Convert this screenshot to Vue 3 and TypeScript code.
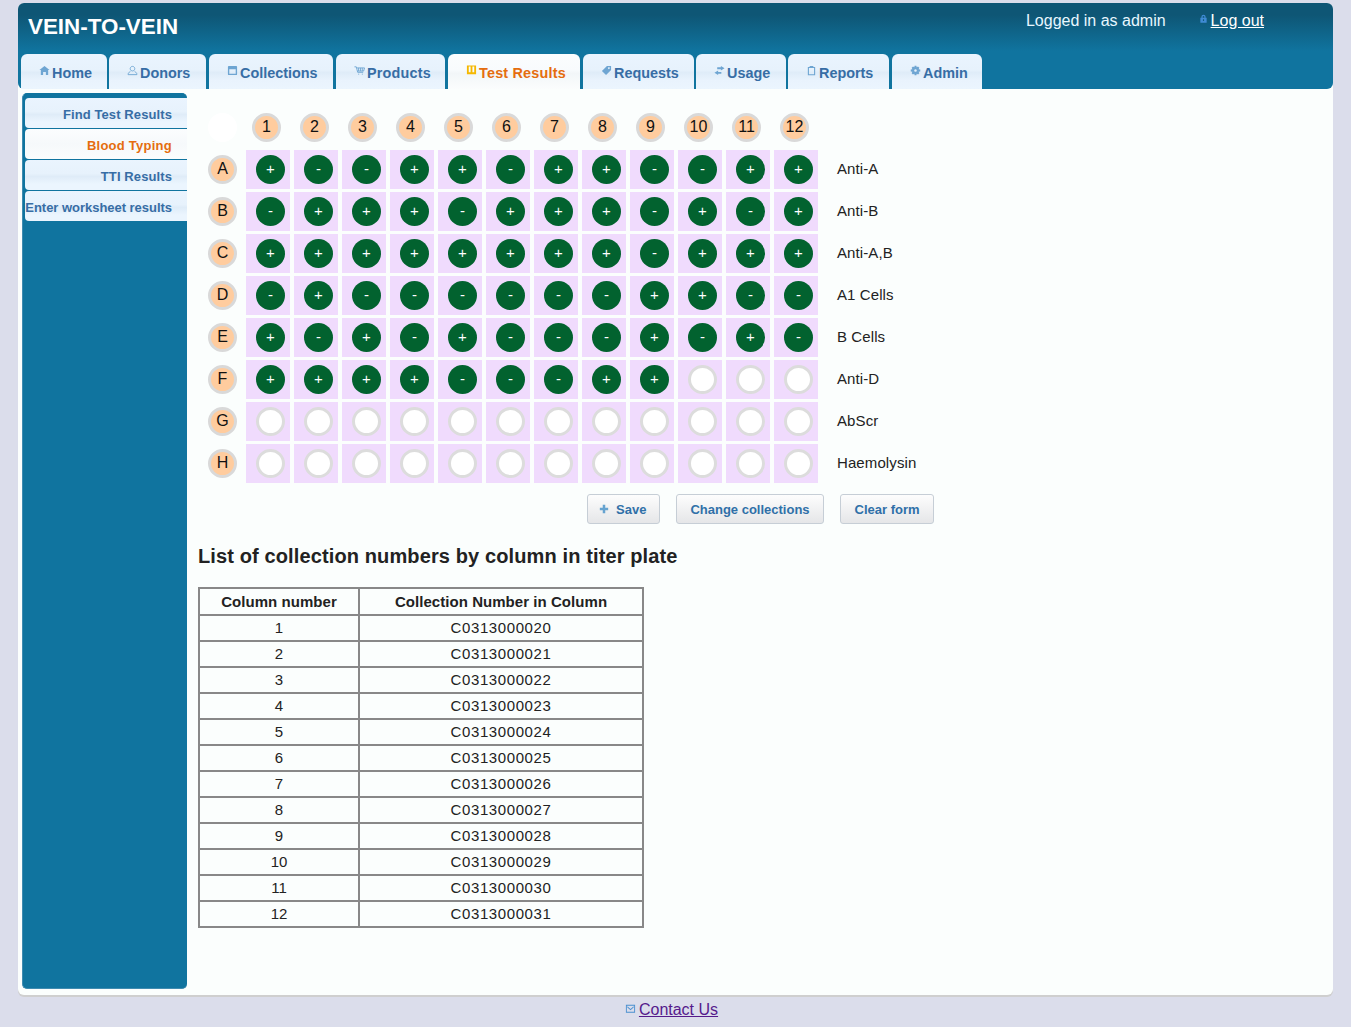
<script setup lang="ts">
interface Tab { label: string; icon: string; active?: boolean; w: number; mr: number; wide?: boolean }

const icons: Record<string, string> = {
  home: 'M6 1 L11.5 5.5 L10 5.5 L10 11 L7.5 11 L7.5 7.5 L4.5 7.5 L4.5 11 L2 11 L2 5.5 L0.5 5.5 Z',
  donor: 'M6 1.5 a2.5 2.5 0 1 1 -0.01 0 Z M3.8 6.8 L1.2 9.2 L1.2 10.5 L10.8 10.5 L10.8 9.2 L8.2 6.8',
  collection: 'M2 1 H10 A1 1 0 0 1 11 2 V10 A1 1 0 0 1 10 11 H2 A1 1 0 0 1 1 10 V2 A1 1 0 0 1 2 1 Z M2.5 4.5 V9.5 H9.5 V4.5 Z',
  cart: 'M0.5 2 H2.5 L4 8 H10 M3 3.2 H11.5 L10.5 6.6 H3.8 M5 3.2 V6.6 M7 3.2 V6.6 M9 3.2 V6.6 M4.6 10 h1 M8.6 10 h1',
  book: 'M1 0.5 H11 V10 H1 Z M3 1.5 V8 H5 V1.5 Z M7 1.5 V8 H9 V1.5 Z',
  tag: 'M6.5 1 H11 V5.5 L5.5 11 L1 6.5 Z M8.6 2.4 a1 1 0 1 0 0.01 0 Z',
  swap: 'M7.5 1 L11.5 3.5 L7.5 6 V4.5 H3.5 V2.5 H7.5 Z M4.5 6 V7.5 H8 V9.5 H4.5 V11 L0.5 8.5 Z',
  clip: 'M4 1 H8 V2.2 H10 V11.2 H2 V2.2 H4 Z M3.2 3.4 V10 H8.8 V3.4 Z',
  gear: 'M5 0.8 H7 L7.3 2.4 L8.7 1.6 L10.2 3 L9.4 4.5 L11.2 5 V7 L9.4 7.4 L10.2 9 L8.8 10.4 L7.3 9.6 L7 11.2 H5 L4.7 9.6 L3.2 10.4 L1.8 9 L2.6 7.4 L0.8 7 V5 L2.6 4.5 L1.8 3 L3.3 1.6 L4.7 2.4 Z M6 4.6 a1.4 1.4 0 1 0 0.01 0 Z',
  lock: 'M3 5 V3.6 A3 3 0 0 1 9 3.6 V5 H10.5 V12 H1.5 V5 Z M4.8 5 H7.2 V3.6 A1.2 1.2 0 0 0 4.8 3.6 Z M5.2 7.2 H6.8 V9.5 H5.2 Z',
  mail: 'M1 2 H11 V10.5 H1 Z M2 3 V9.5 H10 V3 Z M2.6 3.6 L6 6.6 L9.4 3.6 L9.4 4.8 L6 7.8 L2.6 4.8 Z',
  plus: 'M4.5 1 H7.5 V4.5 H11 V7.5 H7.5 V11 H4.5 V7.5 H1 V4.5 H4.5 Z'
}

const tabs: Tab[] = [
  { label: 'Home', icon: 'home', w: 86, mr: 2 },
  { label: 'Donors', icon: 'donor', w: 97, mr: 3 },
  { label: 'Collections', icon: 'collection', w: 124, mr: 3 },
  { label: 'Products', icon: 'cart', w: 109, mr: 3, wide: true },
  { label: 'Test Results', icon: 'book', active: true, w: 132, mr: 3, wide: true },
  { label: 'Requests', icon: 'tag', w: 111, mr: 2 },
  { label: 'Usage', icon: 'swap', w: 90, mr: 2 },
  { label: 'Reports', icon: 'clip', w: 101, mr: 3 },
  { label: 'Admin', icon: 'gear', w: 90, mr: 0 }
]

const side = [
  { label: 'Find Test Results' },
  { label: 'Blood Typing', active: true },
  { label: 'TTI Results' },
  { label: 'Enter worksheet results', tight: true }
]

const cols = Array.from({ length: 12 }, (_, i) => i + 1)
const rows = [
  { key: 'A', name: 'Anti-A', wells: '+--++-++--++' },
  { key: 'B', name: 'Anti-B', wells: '-+++-+++-+-+' },
  { key: 'C', name: 'Anti-A,B', wells: '++++++++-+++' },
  { key: 'D', name: 'A1 Cells', wells: '-+------++--' },
  { key: 'E', name: 'B Cells', wells: '+-+-+---+-+-' },
  { key: 'F', name: 'Anti-D', wells: '++++---++   ' },
  { key: 'G', name: 'AbScr', wells: '            ' },
  { key: 'H', name: 'Haemolysin', wells: '            ' }
]

const numbers = cols.map((n) => ({
  col: n,
  id: 'C03130000' + String(19 + n)
}))
</script>

<template>
  <div class="page">
    <div class="shell">
      <header class="top">
        <div class="top-row">
          <h1 class="brand">VEIN-TO-VEIN</h1>
          <div class="user">
            <span class="who">Logged in as admin</span>
            <svg class="lock" viewBox="1 0 10 12"><path :d="icons.lock" fill-rule="evenodd" /></svg>
            <a class="logout" href="#">Log out</a>
          </div>
        </div>
        <nav class="tabs">
          <a
            v-for="t in tabs"
            :key="t.label"
            class="tab"
            :class="{ on: t.active, wide: t.wide }"
            :style="{ width: t.w + 'px', marginRight: t.mr + 'px' }"
            href="#"
          >
            <svg class="ico" viewBox="0 0 12 12">
              <path :d="icons[t.icon]" fill-rule="evenodd" :class="{ line: t.icon === 'donor' || t.icon === 'cart' }" />
            </svg>
            <span>{{ t.label }}</span>
          </a>
        </nav>
      </header>

      <div class="body">
        <aside class="side">
          <a
            v-for="s in side"
            :key="s.label"
            class="side-item"
            :class="{ on: s.active, tight: s.tight }"
            href="#"
          >{{ s.label }}</a>
        </aside>

        <main class="main">
          <div class="plate">
            <div class="head-blank"><span class="blank"></span></div>
            <div v-for="c in cols" :key="c" class="head-cell"><span class="pill">{{ c }}</span></div>
            <div class="tail"></div>
            <template v-for="r in rows" :key="r.key">
              <div class="row-key"><span class="pill">{{ r.key }}</span></div>
              <div v-for="(w, i) in r.wells.split('')" :key="i" class="well">
                <span class="dot" :class="{ empty: w === ' ' }">{{ w === ' ' ? '' : w }}</span>
              </div>
              <div class="row-name">{{ r.name }}</div>
            </template>
          </div>

          <div class="actions">
            <button class="btn save" type="button">
              <svg class="plus" viewBox="0 0 12 12"><path :d="icons.plus" /></svg>Save
            </button>
            <button class="btn change" type="button">Change collections</button>
            <button class="btn clear" type="button">Clear form</button>
          </div>

          <h2 class="title">List of collection numbers by column in titer plate</h2>

          <table class="list">
            <thead>
              <tr><th class="c1">Column number</th><th class="c2">Collection Number in Column</th></tr>
            </thead>
            <tbody>
              <tr v-for="n in numbers" :key="n.col"><td>{{ n.col }}</td><td class="code">{{ n.id }}</td></tr>
            </tbody>
          </table>
        </main>
      </div>
    </div>
    <footer class="foot">
      <svg class="mail" viewBox="0 0 12 12"><path :d="icons.mail" fill-rule="evenodd" /></svg>
      <a class="contact" href="#">Contact Us</a>
    </footer>
  </div>
</template>

<style>
html, body { margin: 0; padding: 0; background: #dbddeb; }
</style>

<style scoped>
.page {
  width: 1351px;
  height: 1027px;
  padding-top: 3px;
  box-sizing: border-box;
  overflow: hidden;
  font-family: "Liberation Sans", Arial, sans-serif;
  color: #222;
}
.shell {
  margin-left: 18px;
  width: 1315px;
  height: 992px;
  background: #fbfefd;
  border-radius: 6px;
  box-shadow: 0 2px 0 #cfcfcf;
  display: flex;
  flex-direction: column;
}
.top {
  height: 86px;
  border-radius: 6px;
  background: linear-gradient(#0e5675 0, #0e5675 12px, #10749f 48px, #10749f 100%);
  display: flex;
  flex-direction: column;
  justify-content: space-between;
}
.top-row { display: flex; justify-content: space-between; }
.brand {
  margin: 10px 0 0 10px;
  font-size: 22.4px;
  line-height: 28px;
  font-weight: bold;
  color: #fff;
}
.user {
  display: flex;
  align-items: flex-start;
  margin: 8px 69px 0 0;
  font-size: 16px;
  line-height: 19px;
  color: #e8f7ff;
}
.lock { width: 7px; height: 9px; margin: 3px 4px 0 34px; fill: #3f8ad4; }
.logout { color: #fff; }
.tabs { display: flex; margin-left: 3px; }
.tab {
  height: 35px;
  box-sizing: border-box;
  display: flex;
  align-items: flex-start;
  border-radius: 6px 6px 0 0;
  background: linear-gradient(#eaf4fe 0, #e7f2fc 45%, #dfecf8 53%, #e9f3fd 75%, #ebf5fe 100%);
  color: #376da5;
  font-size: 14.4px;
  line-height: 17px;
  font-weight: bold;
  text-decoration: none;
  padding: 11px 0 0 18px;
  white-space: nowrap;
}
.tab.wide span { letter-spacing: 0.2px; }
.tab.on {
  background: linear-gradient(#fbfdfe 0, #f8fbfd 45%, #f2f6f8 55%, #fbfdfd 100%);
  color: #e56d0e;
}
.ico { width: 11px; height: 11px; margin: 0 2px 0 0; flex: none; fill: #6ea5d2; }
.ico .line { fill: none; stroke: #6ea5d2; stroke-width: 1; }
.tab.on .ico { fill: #f5b800; }
.body { flex: 1; display: flex; align-items: flex-start; }
.side {
  width: 165px;
  height: 896px;
  margin: 4px 0 0 4px;
  box-sizing: border-box;
  padding-top: 4px;
  padding-left: 2px;
  background: #10749f;
  border: 1px solid #3f8bb0;
  border-top-color: #10749f;
  border-right: none;
  border-radius: 5px;
  display: flex;
  flex-direction: column;
  gap: 1px;
}
.side-item {
  height: 30px;
  box-sizing: border-box;
  padding: 10px 15px 0 0;
  text-align: right;
  border-radius: 4px 0 0 4px;
  background: linear-gradient(#eaf4fe 0, #e7f2fc 45%, #dfecf8 55%, #ebf5fe 80%);
  color: #376da5;
  font-size: 13px;
  line-height: 14px;
  font-weight: bold;
  letter-spacing: 0.1px;
  text-decoration: none;
  white-space: nowrap;
}
.side-item.tight { letter-spacing: -0.03px; }
.side-item.on {
  background: linear-gradient(#fbfdfe 0, #f6f9fb 50%, #fbfdfd 100%);
  color: #e56d0e;
  letter-spacing: 0.25px;
}
.main { flex: 1; padding: 18px 0 0 11px; }
.plate {
  display: grid;
  grid-template-columns: 38px repeat(12, 44px) auto;
  grid-template-rows: 40px repeat(8, 39px);
  column-gap: 4px;
  row-gap: 3px;
  margin-left: 6px;
  justify-content: start;
}
.head-blank, .row-key { display: flex; align-items: center; padding-left: 4px; }
.blank { width: 29px; height: 29px; border-radius: 50%; background: #fff; }
.head-cell { display: flex; align-items: center; padding-left: 6px; }
.pill {
  width: 29px;
  height: 29px;
  box-sizing: border-box;
  border: 3px solid #d9d9d9;
  border-radius: 50%;
  background: #ffcc9e;
  color: #111;
  font-size: 16px;
  line-height: 21px;
  text-align: center;
}
.well {
  background: #f0dbfd;
  display: flex;
  align-items: center;
  padding-left: 10px;
}
.dot {
  width: 29px;
  height: 29px;
  border-radius: 50%;
  background: #02622f;
  color: #fff;
  font-size: 15px;
  line-height: 27px;
  text-align: center;
  box-sizing: border-box;
}
.dot.empty { background: #fff; border: 3px solid #dcdcdc; }
.row-name {
  padding-left: 15px;
  font-size: 15px;
  line-height: 37px;
  letter-spacing: 0.1px;
  white-space: nowrap;
}
.actions {
  display: flex;
  margin: 11px 0 0 389px;
  gap: 16px;
}
.btn {
  height: 30px;
  box-sizing: border-box;
  padding: 0 13px;
  border: 1px solid #c6ced6;
  border-radius: 3px;
  background: linear-gradient(#fdfdfd, #e5e6e8);
  color: #2f70a8;
  font-family: inherit;
  font-size: 13px;
  font-weight: bold;
  white-space: nowrap;
  display: flex;
  align-items: center;
}
.save { padding: 0 13px 0 11px; }
.clear { padding: 0 13px 0 14px; }
.plus { width: 10px; height: 10px; margin-right: 7px; fill: #66a3d0; }
.title {
  margin: 20px 0 0;
  font-size: 20px;
  line-height: 24px;
  font-weight: bold;
  letter-spacing: 0.12px;
  color: #222;
}
.list {
  margin-top: 19px;
  border-collapse: collapse;
  border: 2px solid #888;
  font-size: 15px;
  color: #222;
}
.list th, .list td {
  border: 2px solid #888;
  height: 26px;
  padding: 0;
  box-sizing: border-box;
  text-align: center;
  line-height: 18px;
}
.list th { font-weight: bold; height: 27px; letter-spacing: 0.05px; }
.list td.code { letter-spacing: 0.6px; }
.c1 { width: 160px; }
.c2 { width: 284px; }
.foot {
  height: 32px;
  display: flex;
  justify-content: center;
  align-items: flex-start;
  padding: 5px 8px 0 0;
  box-sizing: border-box;
}
.mail { width: 11px; height: 11px; margin: 3px 3px 0 0; fill: #4a90d0; }
.contact { font-size: 16px; line-height: 19px; color: #551a8b; }
</style>
